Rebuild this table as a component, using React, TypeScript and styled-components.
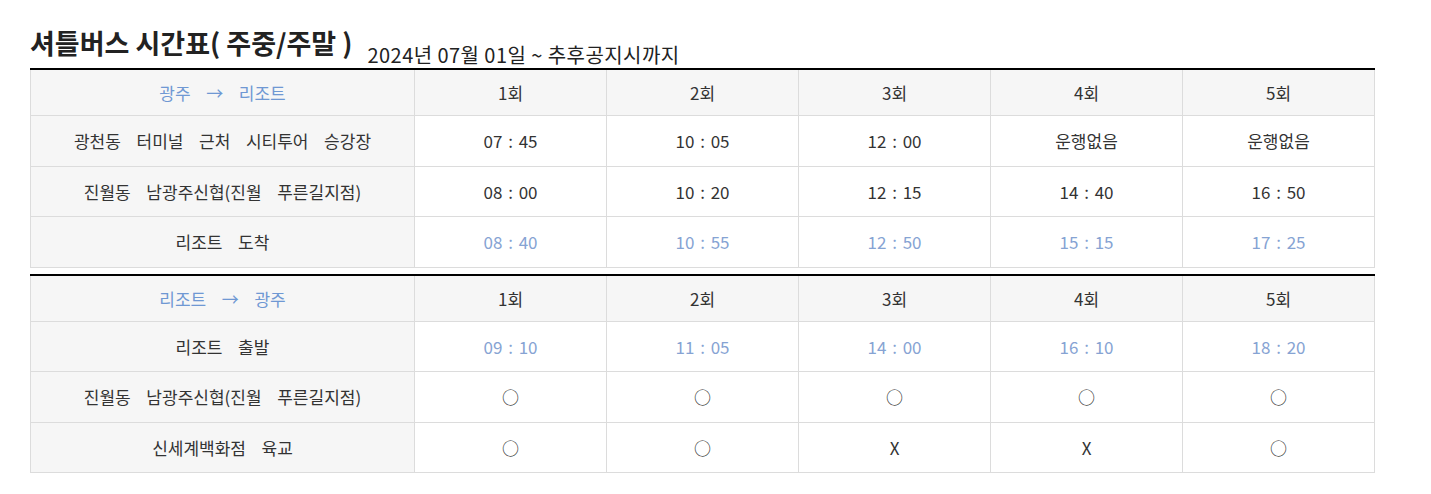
import { createGlobalStyle, styled } from "styled-components";

const GlobalStyle = createGlobalStyle`
  body {
    margin: 0;
    background: #fff;
    font-family: "Noto Sans CJK KR", "Noto Sans", sans-serif;
    color: #333;
  }
`;

type Row = { stop: string; times: string[]; accent?: boolean };
type Schedule = { route: string; rows: Row[] };

const rounds = ["1회", "2회", "3회", "4회", "5회"];

const schedules: Schedule[] = [
  {
    route: "광주  →  리조트",
    rows: [
      { stop: "광천동  터미널  근처  시티투어  승강장", times: ["07 : 45", "10 : 05", "12 : 00", "운행없음", "운행없음"] },
      { stop: "진월동  남광주신협(진월  푸른길지점)", times: ["08 : 00", "10 : 20", "12 : 15", "14 : 40", "16 : 50"] },
      { stop: "리조트  도착", times: ["08 : 40", "10 : 55", "12 : 50", "15 : 15", "17 : 25"], accent: true },
    ],
  },
  {
    route: "리조트  →  광주",
    rows: [
      { stop: "리조트  출발", times: ["09 : 10", "11 : 05", "14 : 00", "16 : 10", "18 : 20"], accent: true },
      { stop: "진월동  남광주신협(진월  푸른길지점)", times: ["○", "○", "○", "○", "○"] },
      { stop: "신세계백화점  육교", times: ["○", "○", "X", "X", "○"] },
    ],
  },
];

function App() {
  return (
    <Page>
      <GlobalStyle />
      <Heading>
        <Title>셔틀버스 시간표( 주중/주말 )</Title>
        <Period>2024년 07월 01일 ~ 추후공지시까지</Period>
      </Heading>
      {schedules.map((s, i) => (
        <Table key={i} $first={i === 0}>
          <colgroup>
            <col style={{ width: 384 }} />
            {rounds.map((r) => (
              <col key={r} />
            ))}
          </colgroup>
          <thead>
            <tr>
              <RouteCell>{s.route}</RouteCell>
              {rounds.map((r) => (
                <HeadCell key={r}>{r}</HeadCell>
              ))}
            </tr>
          </thead>
          <tbody>
            {s.rows.map((row) => (
              <tr key={row.stop}>
                <StopCell>{row.stop}</StopCell>
                {row.times.map((t, j) => (
                  <TimeCell key={j} $accent={row.accent}>
                    {t}
                  </TimeCell>
                ))}
              </tr>
            ))}
          </tbody>
        </Table>
      ))}
    </Page>
  );
}

export default App;

const Page = styled.div`
  width: 1345px;
  padding: 22px 0 0 30px;
`;

const Heading = styled.div`
  display: flex;
  align-items: flex-end;
  gap: 15px;
  height: 46px;
`;

const Title = styled.h3`
  margin: 0 0 9px;
  font-size: 27px;
  font-weight: 700;
  line-height: 32px;
  color: #222;
`;

const Period = styled.span`
  margin-bottom: 1px;
  font-size: 20px;
  line-height: 24px;
  color: #222;
  letter-spacing: 0.45px;
`;

const Table = styled.table<{ $first?: boolean }>`
  width: 1345px;
  border-collapse: collapse;
  table-layout: fixed;
  border-top: 2px solid #000;
  margin-top: ${(p) => (p.$first ? "0" : "6px")};
  font-size: 17px;
`;

const cellBase = `
  border: 1px solid #dcdcdc;
  text-align: center;
  white-space: pre;
  word-spacing: 4px;
  padding: 0;
`;

const HeadCell = styled.th`
  ${cellBase}
  border-top: none;
  height: 45px;
  background: #f6f6f6;
  font-weight: 400;
  color: #333;
`;

const RouteCell = styled(HeadCell)`
  color: #6f98d3;
`;

const StopCell = styled.td`
  ${cellBase}
  height: 49.5px;
  background: #f6f6f6;
  color: #333;
`;

const TimeCell = styled.td<{ $accent?: boolean }>`
  ${cellBase}
  height: 49.5px;
  background: #fff;
  word-spacing: 2px;
  color: ${(p) => (p.$accent ? "#86a3d3" : "#333")};
`;
